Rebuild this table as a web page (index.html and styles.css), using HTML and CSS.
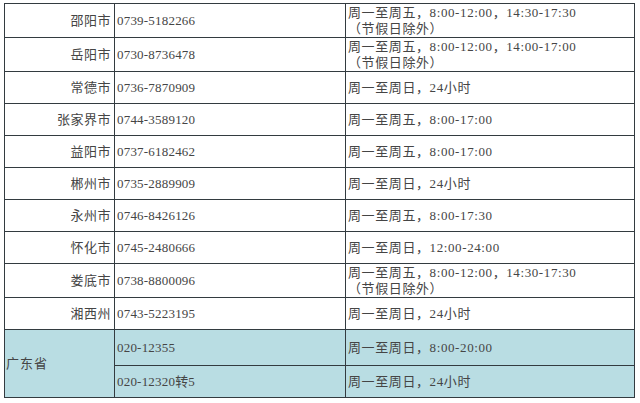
FILE: index.html
```html
<!DOCTYPE html>
<html lang="zh">
<head>
<meta charset="utf-8">
<link rel="stylesheet" href="styles.css">
</head>
<body>
<table class="tbl">
  <colgroup>
    <col class="c1"><col class="c2"><col class="c3">
  </colgroup>
  <tr class="two"><td class="city">邵阳市</td><td class="tel">0739-5182266</td><td class="hrs">周一至周五，8:00-12:00，14:30-17:30<br>（节假日除外）</td></tr>
  <tr class="two"><td class="city">岳阳市</td><td class="tel">0730-8736478</td><td class="hrs">周一至周五，8:00-12:00，14:00-17:00<br>（节假日除外）</td></tr>
  <tr class="one"><td class="city">常德市</td><td class="tel">0736-7870909</td><td class="hrs">周一至周日，24小时</td></tr>
  <tr class="one"><td class="city">张家界市</td><td class="tel">0744-3589120</td><td class="hrs">周一至周五，8:00-17:00</td></tr>
  <tr class="one"><td class="city">益阳市</td><td class="tel">0737-6182462</td><td class="hrs">周一至周五，8:00-17:00</td></tr>
  <tr class="one"><td class="city">郴州市</td><td class="tel">0735-2889909</td><td class="hrs">周一至周日，24小时</td></tr>
  <tr class="one"><td class="city">永州市</td><td class="tel">0746-8426126</td><td class="hrs">周一至周五，8:00-17:30</td></tr>
  <tr class="one"><td class="city">怀化市</td><td class="tel">0745-2480666</td><td class="hrs">周一至周日，12:00-24:00</td></tr>
  <tr class="two"><td class="city">娄底市</td><td class="tel">0738-8800096</td><td class="hrs">周一至周五，8:00-12:00，14:30-17:30<br>（节假日除外）</td></tr>
  <tr class="one"><td class="city">湘西州</td><td class="tel">0743-5223195</td><td class="hrs">周一至周日，24小时</td></tr>
  <tr class="blue b1"><td class="prov" rowspan="2">广东省</td><td class="tel">020-12355</td><td class="hrs">周一至周日，8:00-20:00</td></tr>
  <tr class="blue b2"><td class="tel">020-12320转5</td><td class="hrs">周一至周日，24小时</td></tr>
</table>
</body>
</html>
```

FILE: styles.css
```css
html, body {
  margin: 0;
  padding: 0;
  background: #ffffff;
}
body {
  padding: 3px 0 0 4px;
  font-family: "Liberation Serif", "Noto Sans CJK SC", serif;
  font-size: 13px;
  color: #454545;
}
.tbl {
  border-collapse: collapse;
  width: 630px;
  table-layout: fixed;
}
.c1 { width: 110px; }
.c2 { width: 231px; }
.c3 { width: 289px; }
.tbl td {
  border: 1.6px solid #333b40;
  padding: 0;
  line-height: 16px;
  vertical-align: middle;
  white-space: nowrap;
}
.two { height: 34px; }
.one { height: 32px; }
.b1 { height: 36px; }
.b2 { height: 32px; }
.city {
  text-align: right;
  padding-right: 3px !important;
  letter-spacing: 0.5px;
}
.tel {
  padding-left: 2px !important;
  letter-spacing: 0.2px;
}
.hrs {
  padding-left: 2px !important;
  letter-spacing: 0.6px;
}
.prov {
  padding-left: 1px !important;
  letter-spacing: 1px;
}
.blue td {
  background: #b9dde3;
}
```
